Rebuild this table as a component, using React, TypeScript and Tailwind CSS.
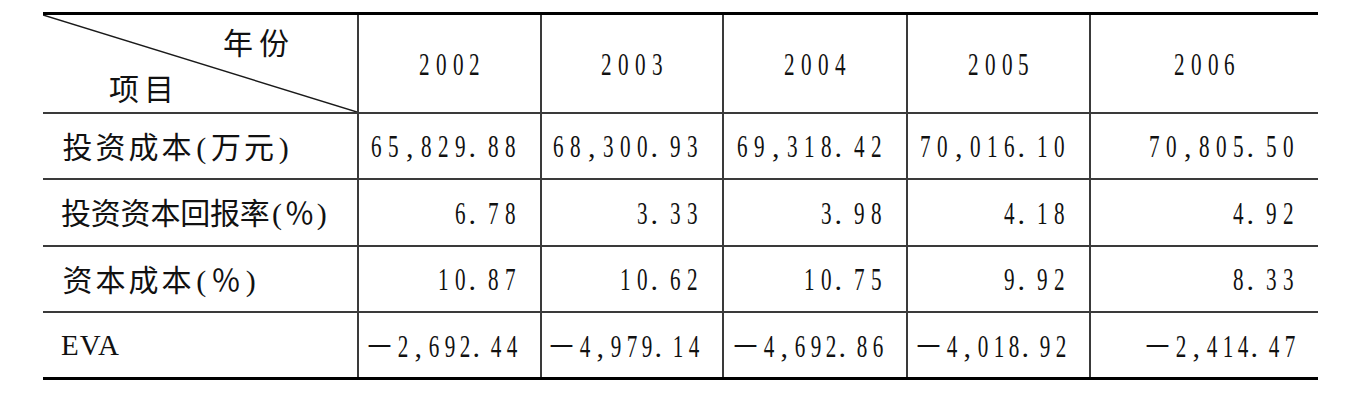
import React from "react";

type Pitch = { half: string; full: string };

// slot widths: every half-width char gets one slot, CJK / full-width chars get two
const BASE: Pitch = { half: "w-[16.8px]", full: "w-[33.6px]" };
const TIGHT: Pitch = { half: "w-[15.5px]", full: "w-[31px]" };
const LABEL: Pitch = { half: "w-[16.5px]", full: "w-[33px]" };
const SQUEEZE: Pitch = { half: "w-[14.9px]", full: "w-[29.8px]" };

const cjkFont = "font-[Noto_Sans_CJK_SC]";
const latinFont = "font-[Liberation_Serif]";

const cols = "grid grid-cols-[314px_183px_182px_184px_183px_229px]";
const line = "border-[#3a3a3a]";

const Typeset = ({ text, pitch = BASE }: { text: string; pitch?: Pitch }) => (
  <span className="inline-flex items-baseline whitespace-nowrap leading-none">
    {Array.from(text).map((ch, i) => {
      if (ch.charCodeAt(0) > 0xff) {
        return (
          <span key={i} className={`inline-block text-center text-[30px] ${cjkFont} ${pitch.full}`}>
            {ch}
          </span>
        );
      }
      if (ch === ".") {
        return (
          <span key={i} className={`inline-block text-left text-[30px] ${latinFont} ${pitch.half}`}>
            {ch}
          </span>
        );
      }
      if (/[0-9]/.test(ch)) {
        return (
          <span key={i} className={`inline-block scale-x-[0.66] text-center text-[32px] ${latinFont} ${pitch.half}`}>
            {ch}
          </span>
        );
      }
      return (
        <span key={i} className={`inline-block text-center text-[30px] ${latinFont} ${pitch.half}`}>
          {ch}
        </span>
      );
    })}
  </span>
);

const years = ["2002", "2003", "2004", "2005", "2006"];

const rows = [
  {
    label: "投资成本(万元)",
    pitch: LABEL,
    values: ["65,829.88", "68,300.93", "69,318.42", "70,016.10", "70,805.50"],
    height: "h-[66px] border-b-2",
    numPitch: BASE,
  },
  {
    label: "投资资本回报率(％)",
    pitch: SQUEEZE,
    values: ["6.78", "3.33", "3.98", "4.18", "4.92"],
    height: "h-[67px] border-b-2",
    numPitch: BASE,
  },
  {
    label: "资本成本(％)",
    pitch: LABEL,
    values: ["10.87", "10.62", "10.75", "9.92", "8.33"],
    height: "h-[66px] border-b-2",
    numPitch: BASE,
  },
  {
    label: "EVA",
    pitch: LABEL,
    values: ["－2,692.44", "－4,979.14", "－4,692.86", "－4,018.92", "－2,414.47"],
    height: "h-[64px]",
    numPitch: TIGHT,
  },
];

export default function App() {
  return (
    <div className="min-h-screen bg-white pl-[43px] pt-[12px] text-[#111]">
      <div className="w-[1275px] border-y-[3px] border-black">
        {/* header */}
        <div className={`${cols} h-[99px] border-b-2 ${line}`}>
          <div className="relative flex flex-col justify-between pt-[11px] pb-[10px]">
            <svg
              className="absolute inset-0 h-full w-full"
              viewBox="0 0 314 97"
              preserveAspectRatio="none"
            >
              <line x1="0" y1="0" x2="314" y2="97" stroke="#1a1a1a" strokeWidth="1.5" />
            </svg>
            <span className={`self-end pr-[62px] text-[30px] leading-[30px] tracking-[6px] ${cjkFont}`}>
              年份
            </span>
            <span className={`self-start pl-[66px] text-[30px] leading-[30px] tracking-[5px] ${cjkFont}`}>
              项目
            </span>
          </div>
          {years.map((y) => (
            <div key={y} className={`flex items-center justify-center border-l-2 ${line}`}>
              <Typeset text={y} />
            </div>
          ))}
        </div>

        {/* body */}
        {rows.map((r) => (
          <div key={r.label} className={`${cols} ${r.height} ${line}`}>
            <div className="flex items-center pl-[18px]">
              {r.label === "EVA" ? (
                <span className={`text-[29px] leading-none tracking-[1px] ${latinFont}`}>EVA</span>
              ) : (
                <Typeset text={r.label} pitch={r.pitch} />
              )}
            </div>
            {r.values.map((v, i) => (
              <div key={i} className={`flex items-center justify-end pr-[21px] border-l-2 ${line}`}>
                <Typeset text={v} pitch={r.numPitch} />
              </div>
            ))}
          </div>
        ))}
      </div>
    </div>
  );
}
